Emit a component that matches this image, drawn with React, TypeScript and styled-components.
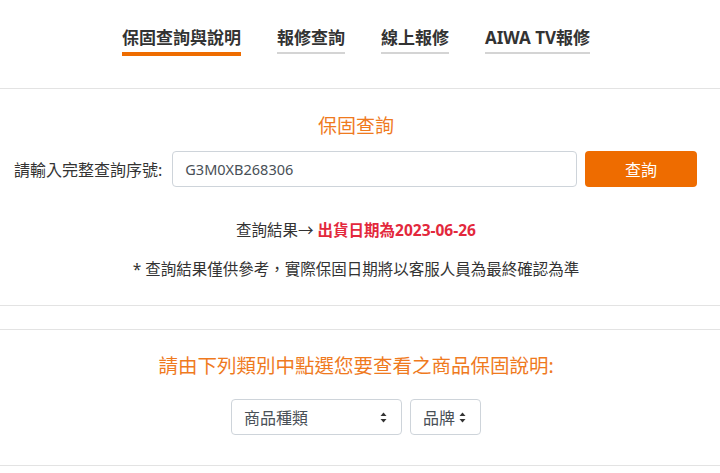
import styled, { createGlobalStyle } from "styled-components";

const GlobalStyle = createGlobalStyle`
  body {
    margin: 0;
    background: #fff;
    font-family: "Noto Sans", "Noto Sans CJK TC", sans-serif;
    color: #333;
  }
`;

const tabs = ["保固查詢與說明", "報修查詢", "線上報修", "AIWA TV報修"];

function SortArrow() {
  return (
    <svg width="7" height="11" viewBox="0 0 7 11">
      <path d="M3.5 0.5 L6.5 4 L0.5 4 Z" fill="#333" />
      <path d="M3.5 10.5 L6.5 7 L0.5 7 Z" fill="#333" />
    </svg>
  );
}

function App() {
  return (
    <>
      <GlobalStyle />
      <Nav>
        <TabList>
          {tabs.map((t, i) => (
            <Tab key={t} $active={i === 0}>
              {t}
            </Tab>
          ))}
        </TabList>
      </Nav>
      <QuerySection>
        <Inner>
          <Title $size={19}>保固查詢</Title>
          <QueryRow>
            <Label>請輸入完整查詢序號:</Label>
            <SerialInput defaultValue="G3M0XB268306" />
            <SearchBtn type="button">查詢</SearchBtn>
          </QueryRow>
          <Result>
            查詢結果→ <ResultStrong>出貨日期為2023-06-26</ResultStrong>
          </Result>
          <Note>* 查詢結果僅供參考，實際保固日期將以客服人員為最終確認為準</Note>
        </Inner>
      </QuerySection>
      <InfoSection>
        <Inner>
          <Title $size={19.5}>請由下列類別中點選您要查看之商品保固說明:</Title>
          <SelectRow>
            <SelectBox $width={171}>
              商品種類
              <SortArrow />
            </SelectBox>
            <SelectBox $width={71}>
              品牌
              <SortArrow />
            </SelectBox>
          </SelectRow>
        </Inner>
      </InfoSection>
    </>
  );
}

export default App;

const Nav = styled.nav`
  height: 89px;
  border-bottom: 1px solid #e3e3e3;
  box-sizing: border-box;
  padding-right: 8px;
`;
const TabList = styled.div`
  display: flex;
  justify-content: center;
  gap: 36px;
  padding-top: 26px;
`;
const Tab = styled.div<{ $active: boolean }>`
  font-size: 17px;
  line-height: 24px;
  font-weight: 700;
  color: #333;
  padding-bottom: 2px;
  height: 24px;
  border-bottom: ${(p) => (p.$active ? "4px solid #ee6c00" : "2px solid #d4d4d4")};
  cursor: pointer;
`;
const Inner = styled.div`
  width: 712px;
  display: flex;
  flex-direction: column;
  align-items: center;
`;
const QuerySection = styled.section`
  padding: 24px 0 24px;
  border-bottom: 1px solid #e3e3e3;
  margin-bottom: 23px;
`;
const InfoSection = styled.section`
  border-top: 1px solid #e3e3e3;
  border-bottom: 1px solid #e3e3e3;
  padding: 23px 0 30px;
`;
const Title = styled.div<{ $size: number }>`
  color: #ef7a1e;
  font-size: ${(p) => p.$size}px;
  line-height: 26px;
`;
const QueryRow = styled.div`
  display: flex;
  align-items: center;
  width: 100%;
  box-sizing: border-box;
  padding: 0 15px 0 14px;
  margin-top: 12px;
  height: 36px;
`;
const Label = styled.label`
  font-size: 16px;
  color: #333;
  white-space: nowrap;
  margin-right: 10px;
`;
const SerialInput = styled.input`
  flex: 1;
  height: 36px;
  box-sizing: border-box;
  border: 1px solid #ced4da;
  border-radius: 4px;
  padding: 0 12px;
  font-family: "Noto Sans", sans-serif;
  font-size: 14.5px;
  color: #495057;
  outline: none;
`;
const SearchBtn = styled.button`
  width: 112px;
  height: 36px;
  margin-left: 8px;
  border: none;
  border-radius: 4px;
  background: #ee6c00;
  color: #fff;
  font-family: "Noto Sans", "Noto Sans CJK TC", sans-serif;
  font-size: 16px;
  cursor: pointer;
`;
const Result = styled.div`
  margin-top: 31px;
  font-size: 15.5px;
  line-height: 24px;
  color: #333;
`;
const ResultStrong = styled.span`
  color: #e3283c;
  font-weight: 700;
`;
const Note = styled.div`
  margin-top: 15px;
  font-size: 15.5px;
  line-height: 24px;
  color: #333;
`;
const SelectRow = styled.div`
  display: flex;
  gap: 8px;
  margin-top: 20px;
`;
const SelectBox = styled.div<{ $width: number }>`
  width: ${(p) => p.$width}px;
  height: 36px;
  box-sizing: border-box;
  border: 1px solid #ced4da;
  border-radius: 4px;
  padding: 0 14px 0 12px;
  display: flex;
  align-items: center;
  justify-content: space-between;
  font-size: 16px;
  color: #495057;
  cursor: pointer;
`;
